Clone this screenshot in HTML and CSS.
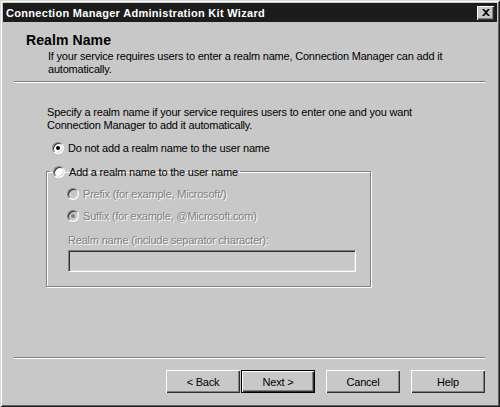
FILE: index.html
```html
<!DOCTYPE html>
<html>
<head>
<meta charset="utf-8">
<link rel="stylesheet" href="styles.css">
</head>
<body>
<div class="window">
  <div class="titlebar">
    <span class="title">Connection Manager Administration Kit Wizard</span>
    <span class="close"><svg width="8" height="7" viewBox="0 0 8 7"><path d="M0 0h2l2 2 2-2h2L5 3.5 8 7H6L4 5 2 7H0l3-3.5z" fill="#000"/></svg></span>
  </div>
  <div class="header">
    <div class="page-title">Realm Name</div>
    <div class="page-desc">If your service requires users to enter a realm name, Connection Manager can add it<br>automatically.</div>
  </div>
  <div class="sep"></div>
  <div class="content">
    <p class="intro">Specify a realm name if your service requires users to enter one and you want<br>Connection Manager to add it automatically.</p>
    <div class="row first"><span class="radio checked"></span><span>Do not add a realm name to the user name</span></div>
    <fieldset class="group">
      <legend class="row legend"><span class="radio"></span><span>Add a realm name to the user name</span></legend>
      <div class="group-body">
        <div class="row disabled"><span class="radio"></span><span class="dtext">Prefix (for example, Microsoft/)</span></div>
        <div class="row disabled second"><span class="radio checked"></span><span class="dtext">Suffix (for example, @Microsoft.com)</span></div>
        <div class="label dtext">Realm name (include separator character):</div>
        <div class="textbox"></div>
      </div>
    </fieldset>
  </div>
  <div class="footer">
    <div class="sep"></div>
    <div class="buttons">
      <div class="btn back">&lt; Back</div>
      <div class="btn default">Next &gt;</div>
      <div class="btn cancel">Cancel</div>
      <div class="btn help">Help</div>
    </div>
  </div>
</div>
</body>
</html>
```
FILE: styles.css
```css
html, body {
  margin: 0;
  padding: 0;
}
body {
  width: 500px;
  height: 407px;
  overflow: hidden;
  background: #c8c8c8;
  font-family: "Liberation Sans", Arial, sans-serif;
  font-size: 11px;
  letter-spacing: -0.2px;
  color: #000;
}
.window {
  box-sizing: border-box;
  width: 500px;
  height: 407px;
  padding: 3px;
  background: #c8c8c8;
  display: flex;
  flex-direction: column;
  box-shadow: inset 1px 1px #d8d8d8, inset -1px -1px #202020, inset 2px 2px #ffffff, inset -2px -2px #606060;
}
.titlebar {
  height: 19px;
  flex: none;
  background: #1c1c1c;
  color: #fff;
  display: flex;
  align-items: center;
  justify-content: space-between;
  padding: 0 3px 0 3px;
}
.title {
  font-weight: bold;
  font-size: 11px;
  letter-spacing: 0.3px;
}
.close {
  box-sizing: border-box;
  width: 17px;
  height: 14px;
  background: #c8c8c8;
  display: flex;
  align-items: center;
  justify-content: center;
  box-shadow: inset 1px 1px #ffffff, inset -1px -1px #303030, inset -2px -2px #808080;
}
.header {
  padding: 10px 0 0 23px;
}
.page-title {
  font-weight: bold;
  font-size: 14px;
  line-height: 16px;
  letter-spacing: 0.1px;
}
.page-desc {
  margin: 2px 0 0 22px;
  line-height: 13px;
  white-space: nowrap;
}
.sep {
  margin: 5px 12px 0 11px;
  height: 0;
  border-top: 1px solid #808080;
  border-bottom: 1px solid #ffffff;
}
.content {
  padding-left: 43px;
}
.intro {
  margin: 23px 0 0 1px;
  line-height: 13px;
  white-space: nowrap;
}
.row {
  display: flex;
  align-items: center;
  height: 16px;
  gap: 4px;
}
.row.first {
  margin-top: 8px;
  padding-left: 6px;
}
.radio {
  box-sizing: border-box;
  width: 12px;
  height: 12px;
  flex: none;
  border-radius: 50%;
  background: #fff;
  border: 1px solid;
  border-color: #808080 #ffffff #ffffff #808080;
  box-shadow: inset 1px 1px #303030, inset -1px -1px #d8d8d8;
  display: flex;
  align-items: center;
  justify-content: center;
}
.radio.checked::after {
  content: "";
  width: 4px;
  height: 4px;
  border-radius: 50%;
  background: #000;
}
.group {
  box-sizing: border-box;
  width: 325px;
  margin: 7px 0 0 0;
  padding: 0 0 14px 3px;
  border: 1px solid #808080;
  box-shadow: inset 1px 1px #ffffff, 1px 1px #ffffff;
  min-inline-size: 0;
}
.legend {
  padding: 0 2px 0 3px;
  height: 17px;
}
.group-body {
  padding-left: 17px;
}
.disabled .radio {
  background: #c8c8c8;
}
.disabled .radio.checked::after {
  background: #808080;
}
.row.disabled {
  margin-top: 6px;
}
.dtext {
  color: #808080;
  text-shadow: 1px 1px 0 #ffffff;
}
.label {
  margin: 10px 0 0 1px;
  line-height: 13px;
}
.textbox {
  box-sizing: border-box;
  margin: 3px 0 0 1px;
  width: 288px;
  height: 22px;
  background: #c8c8c8;
  border: 1px solid;
  border-color: #808080 #ffffff #ffffff #808080;
  box-shadow: inset 1px 1px #303030, inset -1px -1px #d8d8d8;
}
.footer {
  margin-top: auto;
}
.footer .sep {
  margin-top: 0;
}
.buttons {
  display: flex;
  justify-content: flex-end;
  padding: 11px 12px 11px 0;
}
.btn {
  box-sizing: border-box;
  width: 74px;
  height: 23px;
  display: flex;
  align-items: center;
  justify-content: center;
  background: #c8c8c8;
  box-shadow: inset 1px 1px #ffffff, inset -1px -1px #303030, inset -2px -2px #808080;
}
.btn.back {
  margin-right: 1px;
}
.btn.default {
  border: 1px solid #000;
  margin-right: 11px;
}
.btn.help {
  margin-left: 11px;
}
```
